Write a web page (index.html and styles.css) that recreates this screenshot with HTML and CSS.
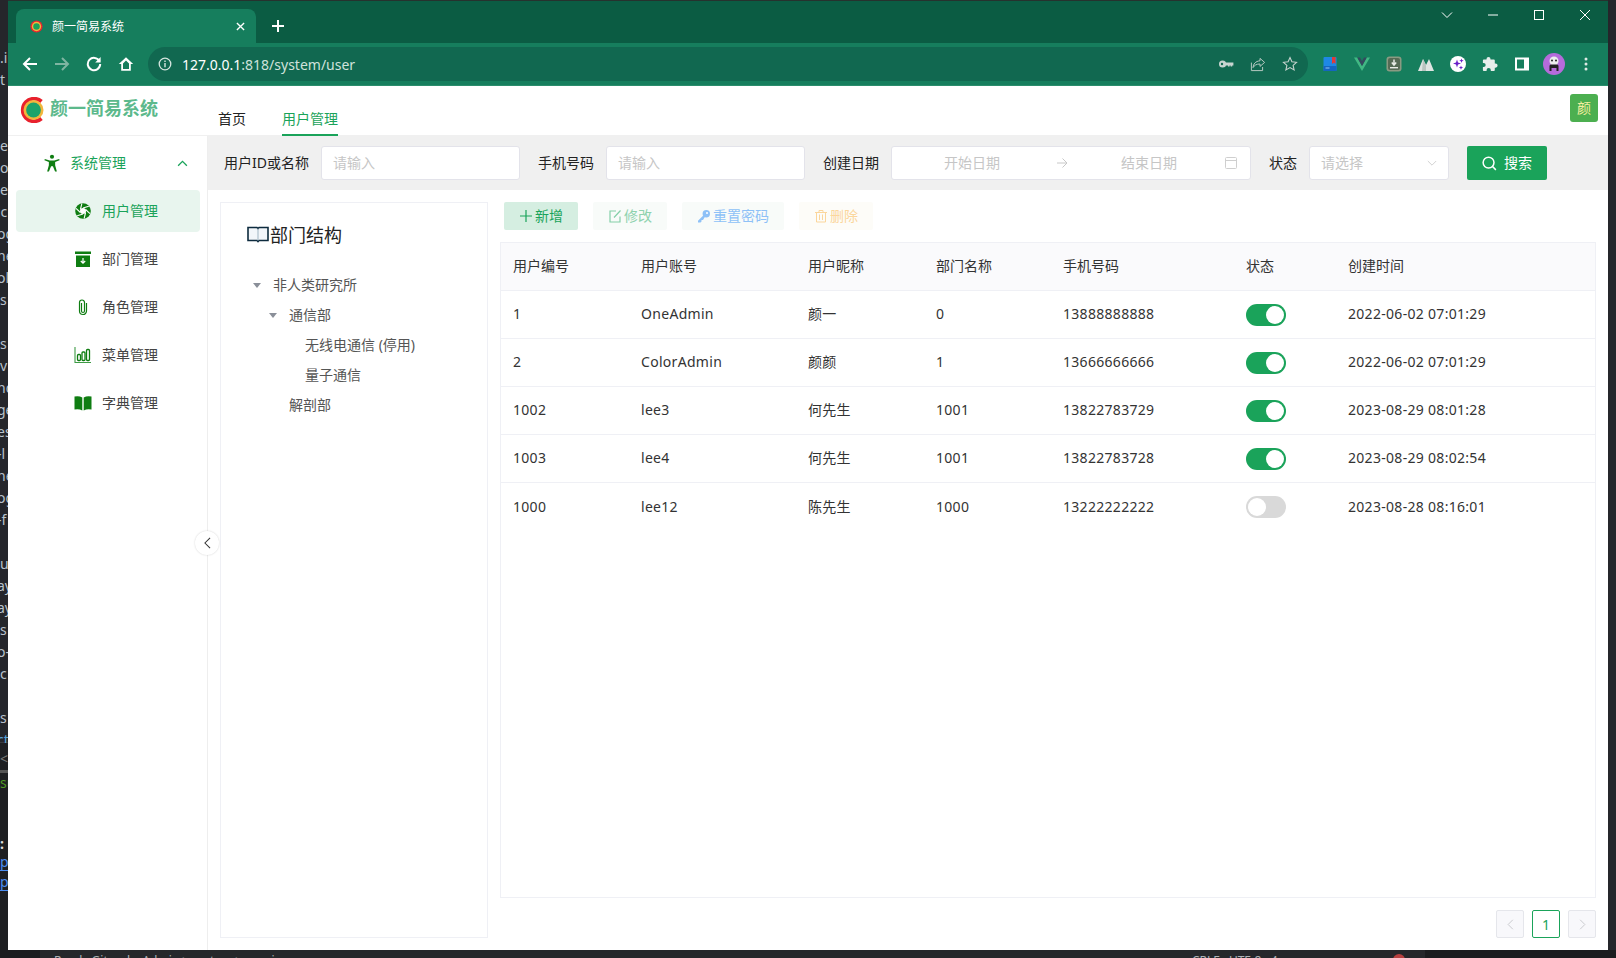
FILE: index.html
```html
<!DOCTYPE html>
<html lang="zh">
<head>
<meta charset="utf-8">
<title>颜一简易系统</title>
<link rel="stylesheet" href="styles.css">
</head>
<body>
<div class="desk">
  <div class="edge">
    <div class="edge-top"></div>
    <div class="edge-lines">
      <span>.i</span><span>t</span><span></span><span></span><span>e</span><span>o</span><span>e</span><span class="two">ic</span><span class="two">og</span><span class="two">ne</span><span class="two">ol</span><span>s</span><span></span><span>s</span><span>v</span><span class="two">nd</span><span class="two">ge</span><span class="two">es</span><span class="two">-l</span><span class="two">ne</span><span class="two">og</span><span class="two">-f</span><span></span><span>u</span><span class="two">ay</span><span class="two">ay</span><span>s</span><span class="two">o-</span><span>c</span><span></span><span>s</span><span class="two blue">ct</span>
    </div>
    <div class="edge-term">
      <span class="g">&lt;</span>
      <span class="bar"></span>
      <span class="ok">su</span>
      <span class="colon">:</span>
      <span class="lnk">p</span>
      <span class="lnk">p</span>
    </div>
  </div>

  <div class="window">
    <div class="tabstrip">
      <div class="tab">
        <svg class="favicon" viewBox="0 0 14 14"><circle cx="7" cy="7" r="6.500" fill="#e8252f"/><circle cx="7" cy="7" r="5" fill="#f2b63c"/><circle cx="7" cy="7" r="3.500" fill="#1aa35a"/></svg>
        <span class="tab-title">颜一简易系统</span>
        <svg class="tab-x" viewBox="0 0 10 10"><path d="M1 1l8 8M9 1l-8 8" stroke="#fff" stroke-width="1.500"/></svg>
      </div>
      <svg class="newtab" viewBox="0 0 14 14"><path d="M7 1v12M1 7h12" stroke="#fff" stroke-width="2"/></svg>
      <div class="winctl">
        <svg class="wc" viewBox="0 0 12 12"><path d="M1 3.500l5 5 5-5" fill="none" stroke="#fff"/></svg>
        <svg class="wc" viewBox="0 0 12 12"><path d="M1 6h10" stroke="#fff" stroke-width="1"/></svg>
        <svg class="wc" viewBox="0 0 12 12"><rect x="1.500" y="1.500" width="9" height="9" fill="none" stroke="#fff"/></svg>
        <svg class="wc" viewBox="0 0 12 12"><path d="M1 1l10 10M11 1L1 11" stroke="#fff"/></svg>
      </div>
    </div>
    <div class="toolbar">
      <svg class="tb" viewBox="0 0 16 16"><path d="M15 8H2M8 2L2 8l6 6" fill="none" stroke="#fff" stroke-width="2"/></svg>
      <svg class="tb" viewBox="0 0 16 16"><path d="M1 8h13M8 2l6 6-6 6" fill="none" stroke="#7fb5a2" stroke-width="2"/></svg>
      <svg class="tb" viewBox="0 0 16 16"><path d="M13.500 5.200A6.200 6.200 0 1 0 14.200 8" fill="none" stroke="#fff" stroke-width="2"/><path d="M14.600 1v5.400H9.200z" fill="#fff"/></svg>
      <svg class="tb" viewBox="0 0 16 16"><path d="M8 1.200L.8 8h2.400v6.800h9.600V8h2.400zM5 13V7.400l3-2.800 3 2.800V13z" fill="#fff"/></svg>
      <div class="omnibox">
        <svg class="info" viewBox="0 0 14 14"><circle cx="7" cy="7" r="5.800" fill="none" stroke="#d5e5df" stroke-width="1.300"/><path d="M7 6v4.200M7 3.600v1.300" stroke="#d5e5df" stroke-width="1.400"/></svg>
        <span class="url"><b>127.0.0.1</b>:818/system/user</span>
        <span class="omni-right">
          <svg class="om" viewBox="0 0 16 16"><circle cx="4.600" cy="8" r="3.600" fill="#c8d4d0"/><circle cx="4" cy="8" r="1.200" fill="#116850"/><path d="M8 6.600h7.400V9.400h-1.200v1.200h-1.600V9.400h-1v1.200H10V9.400H8z" fill="#c8d4d0"/></svg>
          <svg class="om" viewBox="0 0 16 16"><path d="M10 2.400l4.600 4-4.600 4V8c-3.600 0-5.600 1.200-7 3.600C3.400 8 5.400 5.200 10 4.800z" fill="none" stroke="#b5c8c1" stroke-width="1"/><path d="M1.400 6.600v8h11.200V11" fill="none" stroke="#b5c8c1"/></svg>
          <svg class="om" viewBox="0 0 16 16"><path d="M8 1.600l1.900 4.200 4.600.5-3.400 3.100 1 4.500L8 11.600l-4.100 2.300 1-4.500L1.500 6.300l4.600-.5z" fill="none" stroke="#c5d3ce" stroke-width="1.100"/></svg>
        </span>
      </div>
      <div class="exts">
        <svg class="ext" viewBox="0 0 16 16"><rect x="1.500" y="1" width="13" height="14" rx="1" fill="#1e88e5"/><rect x="1.500" y="10" width="13" height="5" fill="#1565c0"/><path d="M10 1h3.500v7l-1.750-1.400L10 8z" fill="#e53935"/><path d="M3.500 12h4" stroke="#8ec5f5"/></svg>
        <svg class="ext" viewBox="0 0 16 16"><path d="M0 1.500h3.200L8 10l4.800-8.500H16L8 15z" fill="#41b883"/><path d="M3.200 1.500h2.800L8 5.200l2-3.700h2.800L8 10z" fill="#35495e"/></svg>
        <svg class="ext" viewBox="0 0 16 16"><rect x="0.500" y="0.500" width="15" height="15" rx="3" fill="#8a9a82"/><rect x="2" y="2" width="12" height="12" rx="2" fill="#566b55"/><path d="M8 3.500v5M5.800 6.500L8 9l2.200-2.500" stroke="#e8ece6" stroke-width="1.500" fill="none"/><rect x="4" y="11" width="8" height="1.400" fill="#e8ece6"/></svg>
        <svg class="ext" viewBox="0 0 16 16"><path d="M0 15L5 3l3 6 3-6 5 12z" fill="#dfe5e2"/><path d="M5 3l3 6v6H4z" fill="#b9c4bf"/></svg>
        <svg class="ext" viewBox="0 0 16 16"><circle cx="8" cy="8" r="8" fill="#fff"/><path d="M7 3.500l1 3 3 1-3 1-1 3-1-3-3-1 3-1zM11.500 2.500l.6 1.600 1.600.6-1.600.6-.6 1.600-.6-1.600-1.600-.6 1.600-.6zM11 9.500l.6 1.500 1.500.6-1.500.6-.6 1.500-.6-1.500-1.500-.6 1.500-.6z" fill="#6a1fc9"/></svg>
        <svg class="ext" viewBox="0 0 16 16"><path d="M6.500 1a2 2 0 0 1 2 2v.6h3.400a.9.900 0 0 1 .9.900v3h.7a2.100 2.100 0 0 1 0 4.200h-.7V14a.9.900 0 0 1-.9.900H8.800v-.8a2.100 2.100 0 0 0-4.200 0v.8H1.800a.9.900 0 0 1-.9-.9v-2.900h.7a2.100 2.100 0 0 0 0-4.200H.9v-2.400a.9.900 0 0 1 .9-.9h2.700V3a2 2 0 0 1 2-2z" fill="#e8eeec"/></svg>
        <svg class="ext" viewBox="0 0 16 16"><path fill-rule="evenodd" d="M1 1.500h14v13H1zM3 3.500v9h7v-9z" fill="#fff"/></svg>
        <svg class="avatar-ext" viewBox="0 0 22 22"><circle cx="11" cy="11" r="11" fill="#b56bdb"/><circle cx="11" cy="8" r="4.500" fill="#eee"/><circle cx="9" cy="7.500" r="1" fill="#222"/><circle cx="13" cy="7.500" r="1" fill="#222"/><path d="M6.500 18v-5q0-1.500 1.500-1.500h6q1.500 0 1.500 1.500v5h-2v-3h-5v3z" fill="#222"/></svg>
        <svg class="ext" viewBox="0 0 16 16"><circle cx="8" cy="3" r="1.500" fill="#dfe9e5"/><circle cx="8" cy="8" r="1.500" fill="#dfe9e5"/><circle cx="8" cy="13" r="1.500" fill="#dfe9e5"/></svg>
      </div>
    </div>

    <header class="apphead">
      <div class="brand">
        <svg class="logo" viewBox="0 0 24 26"><path d="M21.500 4.500A11.300 11.300 0 1 0 21.500 21.500" fill="none" stroke="#e8212d" stroke-width="3.800"/><circle cx="13.500" cy="13" r="10" fill="#f2b63c"/><circle cx="13.500" cy="13" r="7.400" fill="#1aa36b"/></svg>
        <span class="brand-name">颜一简易系统</span>
      </div>
      <nav class="topnav">
        <a class="topnav-item">首页</a>
        <a class="topnav-item is-on">用户管理</a>
      </nav>
      <div class="userbox">颜</div>
    </header>

    <div class="appbody">
      <aside class="sidebar">
        <div class="menu-group">
          <svg class="mi" viewBox="0 0 18 20"><circle cx="9" cy="3" r="2.300" fill="#0f7d12"/><path d="M1 5.500l5.500 1.800h5L17 5.500l.4 1.500-4.900 2v3.500l1.900 7h-2L10 13.500H8l-2.400 6h-2l1.900-7V9L.6 7z" fill="#0f7d12"/></svg>
          <span class="menu-group-t">系统管理</span>
          <svg class="chev" viewBox="0 0 12 8"><path d="M1 6.500l5-5 5 5" fill="none" stroke="#1aa35a" stroke-width="1.500"/></svg>
        </div>
        <a class="menu-item is-on">
          <svg class="mi" viewBox="0 0 18 18"><circle cx="9" cy="9" r="7.800" fill="#0f7d12"/><circle cx="9" cy="9" r="3" fill="#fff"/><g stroke="#fff" stroke-width="1.100"><path d="M9 6l5.800-1.700"/><path d="M9 6l5.800-1.700" transform="rotate(60 9 9)"/><path d="M9 6l5.800-1.700" transform="rotate(120 9 9)"/><path d="M9 6l5.800-1.700" transform="rotate(180 9 9)"/><path d="M9 6l5.800-1.700" transform="rotate(240 9 9)"/><path d="M9 6l5.800-1.700" transform="rotate(300 9 9)"/></g></svg>
          <span>用户管理</span>
        </a>
        <a class="menu-item">
          <svg class="mi" viewBox="0 0 18 18"><rect x="1" y="1.500" width="16" height="2.500" fill="#0f7d12"/><path d="M2 5.500h14V17H2z" fill="#0f7d12"/><path d="M9 8v5M6.800 11L9 13.200 11.200 11" fill="none" stroke="#fff" stroke-width="1.200"/></svg>
          <span>部门管理</span>
        </a>
        <a class="menu-item">
          <svg class="mi" viewBox="0 0 18 18"><path d="M7.500 5v8a1.500 1.500 0 0 0 3 0V4.500a2.500 2.500 0 0 0-5 0V13a3.500 3.500 0 0 0 7 0V5" fill="none" stroke="#0f7d12" stroke-width="1.200"/></svg>
          <span>角色管理</span>
        </a>
        <a class="menu-item">
          <svg class="mi" viewBox="0 0 18 18"><path d="M1 1v15.500h16" fill="none" stroke="#3e9b45" stroke-width="1.100"/><g fill="none" stroke="#0f7d12" stroke-width="1.300"><rect x="3.500" y="8.500" width="3" height="6" rx="1"/><rect x="8" y="6" width="3" height="8.500" rx="1"/><rect x="12.500" y="3.500" width="3" height="11" rx="1"/></g></svg>
          <span>菜单管理</span>
        </a>
        <a class="menu-item">
          <svg class="mi" viewBox="0 0 18 18"><path d="M.5 2.500Q5 1.500 8.300 3.500v13Q5 14.500.5 15.500zM17.500 2.500Q13 1.500 9.700 3.500v13q3.300-2 7.800-1z" fill="#0f7d12"/></svg>
          <span>字典管理</span>
        </a>
        <button class="collapse" type="button" aria-label="收起"><svg viewBox="0 0 8 14"><path d="M7 1L1 7l6 6" fill="none" stroke="#333" stroke-width="1.200"/></svg></button>
      </aside>

      <main class="main">
        <form class="filters">
          <label class="flabel w85">用户ID或名称</label>
          <div class="field w199"><span class="ph">请输入</span></div>
          <label class="flabel w56">手机号码</label>
          <div class="field w199"><span class="ph">请输入</span></div>
          <label class="flabel w56">创建日期</label>
          <div class="field range">
            <span class="ph range-a">开始日期</span>
            <svg class="range-arrow" viewBox="0 0 12 12"><path d="M1 6h10M6.500 1.500L11 6l-4.500 4.500" fill="none" stroke="#c8c8c8"/></svg>
            <span class="ph range-b">结束日期</span>
            <svg class="cal" viewBox="0 0 14 14"><rect x="1.500" y="1.500" width="11" height="11" rx="1" fill="none" stroke="#cfcfcf"/><path d="M1.500 4.500h11" stroke="#cfcfcf"/></svg>
          </div>
          <label class="flabel w28">状态</label>
          <div class="field w140 select"><span class="ph">请选择</span><svg class="sel-ch" viewBox="0 0 12 8"><path d="M1 1l5 5 5-5" fill="none" stroke="#c8c8c8"/></svg></div>
          <button class="search" type="button"><svg viewBox="0 0 16 16"><circle cx="7" cy="7" r="5.800" fill="none" stroke="#fff" stroke-width="1.600"/><path d="M11 11l3.800 3.800" stroke="#fff" stroke-width="1.600"/></svg><span>搜索</span></button>
        </form>

        <div class="work">
          <section class="treecard">
            <h2 class="tree-title">
              <svg class="book" viewBox="0 0 22 18"><path d="M1 2.500h9l1 1 1-1h9V15.500H12l-1 1-1-1H1z" fill="#f2f6fa" stroke="#0d2b3e" stroke-width="1.600"/><path d="M11 3.500v12" stroke="#9fb4c2"/></svg>
              部门结构
            </h2>
            <ul class="tree">
              <li class="node l0"><i class="caret"></i>非人类研究所</li>
              <li class="node l1"><i class="caret"></i>通信部</li>
              <li class="node l2">无线电通信 (停用)</li>
              <li class="node l2">量子通信</li>
              <li class="node l1 leaf">解剖部</li>
            </ul>
          </section>

          <section class="content">
            <div class="actions">
              <button class="act add" type="button"><svg viewBox="0 0 14 14"><path d="M7 1v12M1 7h12" stroke="#1aa35a" stroke-width="1.200"/></svg><span>新增</span></button>
              <button class="act edit" type="button"><svg viewBox="0 0 14 14"><path d="M12 7.500V13H2V2h6M6 8.500L12.500 1.500" fill="none" stroke="#84cfa8" stroke-width="1.200"/></svg><span>修改</span></button>
              <button class="act pwd" type="button"><svg viewBox="0 0 14 14"><circle cx="9.300" cy="4.700" r="3.700" fill="#8ec1f7"/><circle cx="10" cy="4" r="1" fill="#fff"/><path d="M6.800 6L1 11.800V13.500h2.500l1-1V11h1.500l1.800-3z" fill="#8ec1f7"/></svg><span>重置密码</span></button>
              <button class="act del" type="button"><svg viewBox="0 0 14 14"><path d="M1 3.500h12M5 3.500V1.500h4v2M2.500 3.500V13h9V3.500M5.500 5.500V11M8.500 5.500V11" fill="none" stroke="#fbd69c"/></svg><span>删除</span></button>
            </div>
            <div class="tablewrap">
              <table class="grid">
                <colgroup><col class="c1"><col class="c2"><col class="c3"><col class="c4"><col class="c5"><col class="c6"><col class="c7"></colgroup>
                <thead><tr><th>用户编号</th><th>用户账号</th><th>用户昵称</th><th>部门名称</th><th>手机号码</th><th>状态</th><th>创建时间</th></tr></thead>
                <tbody>
                  <tr><td>1</td><td>OneAdmin</td><td>颜一</td><td>0</td><td>13888888888</td><td><span class="sw on"></span></td><td>2022-06-02 07:01:29</td></tr>
                  <tr><td>2</td><td>ColorAdmin</td><td>颜颜</td><td>1</td><td>13666666666</td><td><span class="sw on"></span></td><td>2022-06-02 07:01:29</td></tr>
                  <tr><td>1002</td><td>lee3</td><td>何先生</td><td>1001</td><td>13822783729</td><td><span class="sw on"></span></td><td>2023-08-29 08:01:28</td></tr>
                  <tr><td>1003</td><td>lee4</td><td>何先生</td><td>1001</td><td>13822783728</td><td><span class="sw on"></span></td><td>2023-08-29 08:02:54</td></tr>
                  <tr><td>1000</td><td>lee12</td><td>陈先生</td><td>1000</td><td>13222222222</td><td><span class="sw"></span></td><td>2023-08-28 08:16:01</td></tr>
                </tbody>
              </table>
            </div>
            <div class="pager">
              <span class="pg off"><svg viewBox="0 0 8 14"><path d="M7 1L1 7l6 6" fill="none" stroke="#c8c9cc" stroke-width="1.200"/></svg></span>
              <span class="pg cur">1</span>
              <span class="pg off"><svg viewBox="0 0 8 14"><path d="M1 1l6 6-6 6" fill="none" stroke="#c8c9cc" stroke-width="1.200"/></svg></span>
            </div>
          </section>
        </div>
      </main>
    </div>
  </div>
  <div class="edge-right"></div>
</div>
<div class="statusbar">
  <span class="st-a"></span>
  <span class="st-b">Ready Git: colorAdmin &gt; system &gt; user.js</span>
  <span class="st-c">CRLF&nbsp;&nbsp;&nbsp;UTF-8&nbsp;&nbsp;&nbsp;4</span>
  <span class="st-dot"></span>
  <span class="st-end"></span>
</div>
</body>
</html>
```
FILE: styles.css
```css
* { box-sizing: border-box; }
html, body { margin: 0; height: 100%; }
body {
  width: 1616px;
  height: 958px;
  overflow: hidden;
  background: #1e1f22;
  font-family: "Noto Sans", "Noto Sans CJK SC", sans-serif;
  font-size: 14px;
  color: #303133;
  display: flex;
  flex-direction: column;
}
svg { display: block; flex: none; }
a { color: inherit; text-decoration: none; }
ul { list-style: none; margin: 0; padding: 0; }
button { font-family: inherit; border: 0; }

.desk { display: flex; height: 950px; flex: none; }

.edge { width: 8px; flex: none; overflow: hidden; background: #25262b; color: #b9c2cc; font-size: 14px; display: flex; flex-direction: column; }
.edge-top { height: 47px; flex: none; }
.edge-lines { height: 696px; flex: none; display: flex; flex-direction: column; border-bottom: 1px solid #3a3b40; }
.edge-lines span { height: 22px; line-height: 22px; white-space: nowrap; flex: none; }
.edge-lines .two { margin-left: -3px; }
.edge-lines .blue { color: #5ba4d9; }
.edge-term { flex: 1; background: #1e1f22; display: flex; flex-direction: column; font-size: 14px; line-height: 20px; }
.edge-term .g { color: #777; height: 20px; margin-top: 6px; }
.edge-term .bar { height: 3px; background: #555; margin-top: 1px; flex: none; }
.edge-term .ok { color: #4f9a23; }
.edge-term .colon { color: #ddd; margin-top: 41px; font-weight: 700; }
.edge-term .lnk { color: #4a8cf0; border-bottom: 1px solid #4a8cf0; height: 17px; line-height: 16px; margin-bottom: 3px; flex: none; }
.edge-right { width: 8px; flex: none; background: #25262b; }

.window { width: 1600px; flex: none; display: flex; flex-direction: column; background: #fff; overflow: hidden; position: relative; }

.tabstrip { height: 43px; flex: none; background: #0b5c43; border-top: 1px solid #26322e; display: flex; align-items: flex-end; padding-left: 8px; }
.tab { width: 240px; height: 34px; background: #167e5d; border-radius: 8px 8px 0 0; display: flex; align-items: center; padding: 0 11px 0 14px; color: #fff; }
.favicon { width: 13px; height: 13px; margin-right: 9px; }
.tab-title { font-size: 12px; flex: 1; white-space: nowrap; }
.tab-x { width: 9px; height: 9px; }
.newtab { width: 14px; height: 14px; margin: 0 0 10px 15px; }
.winctl { margin-left: auto; align-self: flex-start; display: flex; margin-top: 8px; margin-right: 17px; gap: 34px; }
.wc { width: 12px; height: 12px; }

.toolbar { height: 43px; flex: none; background: #167e5d; border-bottom: 1px solid #2b8d6c; display: flex; align-items: center; padding-left: 14px; }
.tb { width: 16px; height: 16px; margin-right: 16px; }
.omnibox { width: 1160px; height: 34px; margin-left: -2px; border-radius: 17px; background: #116850; display: flex; align-items: center; padding: 0 10px; color: #fff; }
.info { width: 14px; height: 14px; margin-right: 10px; }
.url { font-size: 14px; color: #cfe2db; white-space: nowrap; }
.url b { font-weight: 400; color: #fff; }
.omni-right { margin-left: auto; display: flex; gap: 16px; }
.om { width: 16px; height: 16px; }
.exts { display: flex; align-items: center; margin-left: 14px; gap: 16px; }
.ext { width: 16px; height: 16px; }
.avatar-ext { width: 22px; height: 22px; margin: 0 -3px; }

.apphead { height: 50px; flex: none; display: flex; align-items: stretch; border-bottom: 1px solid #f0f0f0; background: #fff; }
.brand { width: 210px; flex: none; display: flex; align-items: flex-start; padding: 11px 0 0 12px; }
.logo { width: 24px; height: 26px; margin-right: 6px; }
.brand-name { font-size: 18px; line-height: 20px; color: #5cb98c; font-weight: 700; margin-top: 1px; white-space: nowrap; }
.topnav { display: flex; gap: 36px; align-self: flex-end; }
.topnav-item { height: 30px; line-height: 22px; color: #222; font-size: 14px; padding-top: 2px; border-bottom: 2px solid transparent; margin-bottom: -1px; }
.topnav-item.is-on { color: #1aa35a; border-bottom-color: #1aa35a; }
.userbox { margin: 8px 10px 0 auto; width: 28px; height: 28px; border-radius: 3px; background: #4caf50; color: #f4ee9f; text-align: center; line-height: 27px; font-size: 14px; }

.appbody { flex: 1; min-height: 0; display: flex; }

.sidebar { width: 200px; flex: none; border-right: 1px solid #eeeeee; padding: 0 7px 0 8px; position: relative; background: #fff; }
.menu-group { height: 54px; display: flex; align-items: center; padding-left: 27px; color: #1aa35a; }
.menu-group .mi { margin-right: 9px; }
.menu-group-t { flex: 1; font-size: 14px; margin-bottom: 2px; }
.chev { width: 11px; height: 7px; margin-right: 12px; }
.mi { width: 18px; height: 18px; }
.menu-item { height: 42px; margin-bottom: 6px; display: flex; align-items: center; padding-left: 59px; border-radius: 4px; color: #444; }
.menu-item span { margin-bottom: 2px; }
.menu-item .mi { margin: 0 10px 0 -1px; }
.menu-item.is-on { background: #e8f5ee; color: #1aa35a; }
.collapse { position: absolute; top: 395px; right: -12px; width: 24px; height: 24px; border-radius: 50%; background: #fff; box-shadow: 0 0 2px rgba(0,0,0,.18); display: flex; align-items: center; justify-content: center; padding: 0; z-index: 2; }
.collapse svg { width: 7px; height: 12px; }

.main { flex: 1; min-width: 0; display: flex; flex-direction: column; }
.filters { height: 54px; flex: none; background: #f0f0f0; display: flex; align-items: center; padding-left: 16px; }
.flabel { color: #222; white-space: nowrap; margin: 0 12px 2px 0; flex: none; font-size: 14px; }
.w85 { width: 85px; }
.w56 { width: 56px; }
.w28 { width: 28px; }
.field { height: 34px; background: #fff; border: 1px solid #e3e3ea; border-radius: 3px; display: flex; align-items: center; padding: 0 11px; margin-right: 18px; flex: none; position: relative; }
.w199 { width: 199px; }
.w140 { width: 140px; }
.ph { color: #c6c6c6; font-size: 14px; white-space: nowrap; margin-bottom: 2px; }
.range { width: 360px; padding: 0; }
.range-a { width: 160px; text-align: center; }
.range-arrow { width: 12px; height: 12px; margin-left: 4px; }
.range-b { width: 150px; margin-left: 6px; text-align: center; }
.cal { width: 14px; height: 14px; }
.select { justify-content: space-between; }
.sel-ch { width: 10px; height: 7px; margin-right: 0; }
.search { width: 80px; height: 34px; background: #1aa35a; color: #fff; border-radius: 2px; font-size: 14px; display: flex; align-items: center; justify-content: center; gap: 7px; padding: 0; flex: none; }
.search svg { width: 15px; height: 15px; }
.search span { margin-bottom: 2px; }

.work { flex: 1; min-height: 0; display: flex; gap: 12px; padding: 12px; }
.treecard { width: 268px; flex: none; border: 1px solid #eff0f5; padding: 17px 0 0 26px; }
.tree-title { margin: 0 0 22px; font-size: 18px; font-weight: 400; color: #222; display: flex; align-items: center; gap: 1px; height: 28px; }
.book { width: 22px; height: 18px; }
.tree { margin-left: -26px; }
.node { height: 30px; line-height: 30px; color: #555; font-size: 14px; white-space: nowrap; position: relative; }
.l0 { padding-left: 52px; }
.l1 { padding-left: 68px; }
.l2 { padding-left: 84px; }
.caret { position: absolute; top: 13px; width: 0; height: 0; border: 4px solid transparent; border-top: 5px solid #8a8f99; border-bottom: 0; }
.l0 .caret { left: 32px; }
.l1 .caret { left: 48px; }

.content { flex: 1; min-width: 0; display: flex; flex-direction: column; }
.actions { height: 28px; flex: none; display: flex; gap: 15px; padding-left: 4px; margin-bottom: 12px; }
.act { height: 28px; padding: 0; border-radius: 2px; font-size: 14px; display: flex; align-items: center; justify-content: center; gap: 2px; background: #f8fbf9; }
.act svg { width: 14px; height: 14px; }
.act span { margin-bottom: 2px; }
.add { width: 74px; background: #d5eee1; color: #1aa35a; }
.edit { width: 74px; color: #8fd2ae; }
.pwd { width: 102px; color: #8ec1f7; }
.del { width: 74px; color: #fbd69c; background: #fdfcf8; }
.tablewrap { flex: 1; min-height: 0; border: 1px solid #eff0f5; }
.grid { width: 100%; border-collapse: collapse; table-layout: fixed; }
.c1 { width: 128px; } .c2 { width: 167px; } .c3 { width: 128px; } .c4 { width: 127px; } .c5 { width: 183px; } .c6 { width: 102px; }
.grid th { height: 47px; background: #fafafc; font-weight: 400; text-align: left; padding: 0 0 3px 12px; color: #333; font-size: 14px; border-bottom: 1px solid #eff0f5; }
.grid td { height: 48px; padding: 0 0 2px 12px; color: #333; font-size: 14px; letter-spacing: .3px; border-bottom: 1px solid #eff0f5; white-space: nowrap; }
.grid tr:last-child td { border-bottom: 0; padding-bottom: 0; }
.sw { display: block; width: 40px; height: 22px; margin-top: 4px; border-radius: 11px; background: #d9d9d9; position: relative; }
.grid tr:last-child .sw { margin-top: 2px; }
.sw::after { content: ""; position: absolute; left: 2px; top: 2px; width: 18px; height: 18px; border-radius: 50%; background: #fff; }
.sw.on { background: #1aa35a; }
.sw.on::after { left: 20px; }
.pager { height: 28px; flex: none; margin-top: 12px; display: flex; justify-content: flex-end; gap: 8px; }
.pg { width: 28px; height: 28px; border: 1px solid #e5e6eb; border-radius: 2px; background: #f8f8fb; display: flex; align-items: center; justify-content: center; }
.pg svg { width: 7px; height: 11px; }
.pg.cur { background: #fff; border-color: #1aa35a; color: #1aa35a; font-size: 14px; }

.statusbar { height: 8px; flex: none; overflow: hidden; background: #26272b; display: flex; color: #aeb2b8; font-size: 12px; line-height: 12px; }
.st-a { width: 40px; flex: none; background: #1b1c1f; }
.st-b { margin: 5px 0 0 14px; width: 1138px; flex: none; white-space: nowrap; }
.st-c { margin-top: 5px; width: 201px; flex: none; white-space: nowrap; }
.st-dot { width: 12px; height: 12px; flex: none; border-radius: 50%; background: #b84040; margin: 4px 20px 0 0; }
.st-end { flex: 1; background: #1b1c1f; }
```
